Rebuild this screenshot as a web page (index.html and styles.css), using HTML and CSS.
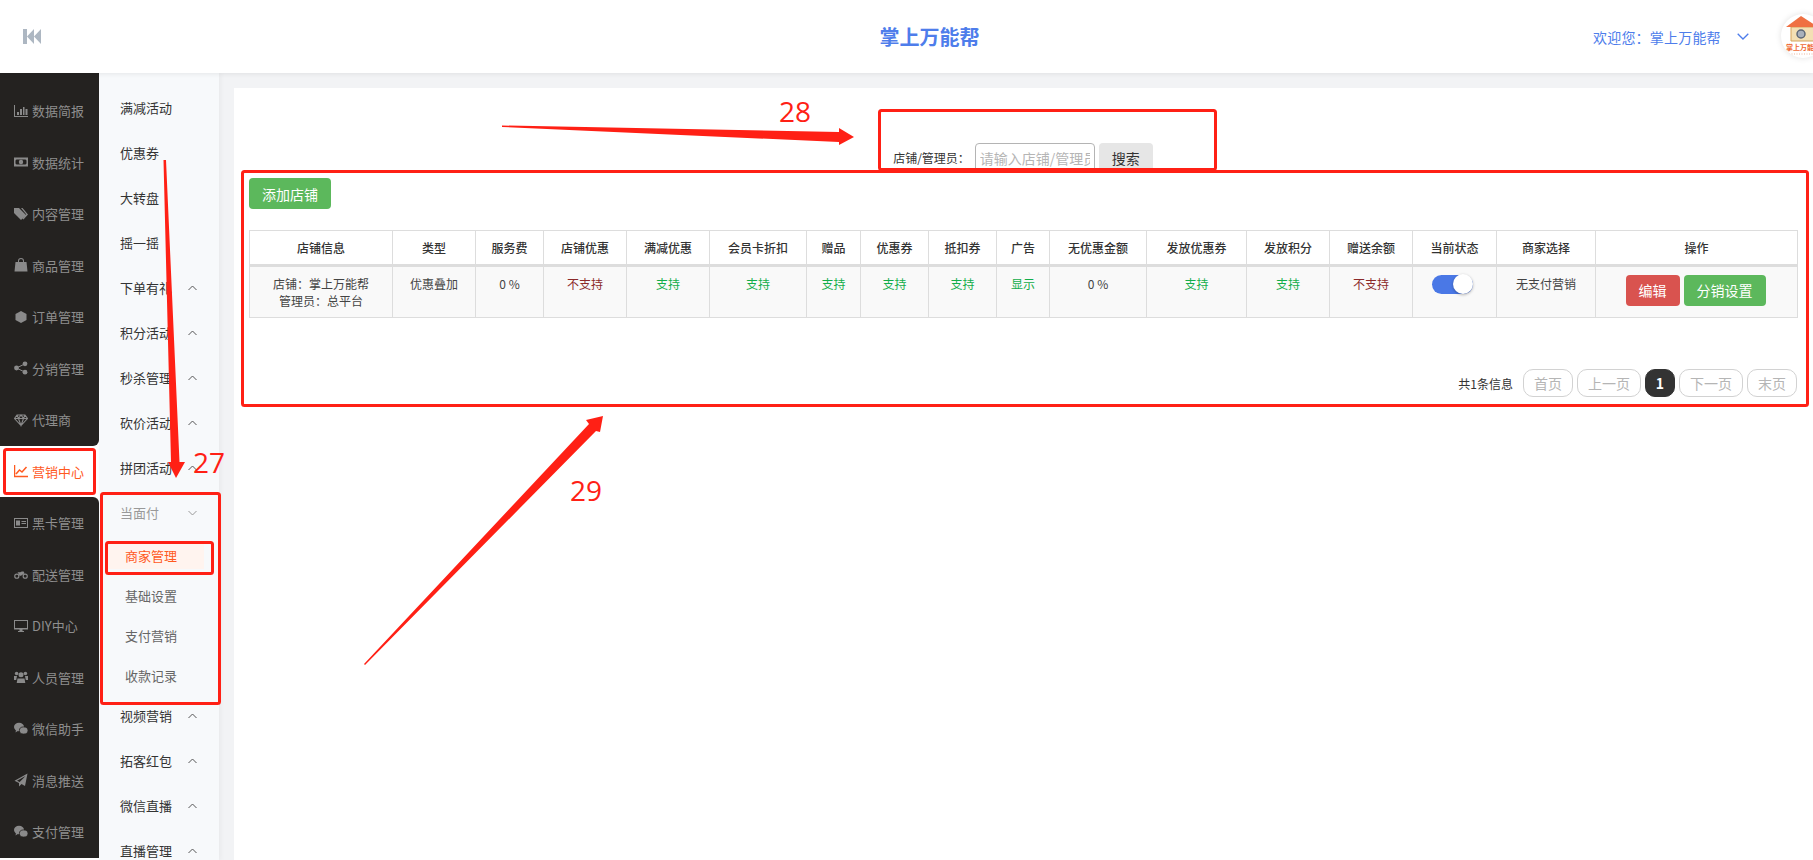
FILE: index.html
```html
<!DOCTYPE html>
<html lang="zh-CN">
<head>
<meta charset="utf-8">
<title>掌上万能帮</title>
<link rel="stylesheet" href="styles.css">
</head>
<body>
<div class="app">
  <header class="topbar">
    <div class="topbar-left">
      <svg class="collapse-icon" viewBox="0 0 18 15"><path d="M0 0h4v15H0zM4 7.500 11 0v15zM11 7.500 18 0v15z"/></svg>
    </div>
    <div class="brand">掌上万能帮</div>
    <div class="topbar-right">
      <span class="welcome">欢迎您：掌上万能帮</span>
      <svg class="user-chevron" viewBox="0 0 12 7"><path d="M.7.7 6 6l5.300-5.300"/></svg>
      <div class="avatar">
        <svg viewBox="0 0 44 44">
          <path class="logo-wall" d="M10 13h25v14H10z"/>
          <path class="logo-roof" d="M20 2 5 13h32z"/>
          <circle class="logo-gear" cx="20" cy="20" r="4"/>
          <text class="logo-name" x="22.500" y="36">掌上万能帮</text>
          <path class="logo-dots" d="M8 40h28"/>
        </svg>
      </div>
    </div>
  </header>

  <div class="workspace">
    <nav class="rail">
      <div class="rail-group rail-group-top">
        <a class="rail-item"><svg class="rail-icon" viewBox="0 0 14 14"><path d="M0 1h1v11h13v1H0zM3 8h2v3H3zM6 5h2v6H6zM9 3h1.500v8H9zM11.500 5h2v6h-2z"/></svg>数据简报</a>
        <a class="rail-item"><svg class="rail-icon" viewBox="0 0 14 14"><path fill-rule="evenodd" d="M0 2.500h14v9H0zM2.500 4.500 1.500 5.500v3l1 1h9l1-1v-3l-1-1zM7 4.800a2.200 2.200 0 1 1 0 4.400 2.200 2.200 0 0 1 0-4.400z"/></svg>数据统计</a>
        <a class="rail-item"><svg class="rail-icon" viewBox="0 0 14 14"><path d="M0 1h5l7 7-5 5-7-7zM7 1h1.500l5.500 6.500-4.500 5-1-.8 3.800-4.200z"/></svg>内容管理</a>
        <a class="rail-item"><svg class="rail-icon" viewBox="0 0 14 14"><path fill-rule="evenodd" d="M1.500 4H4V3a3 3 0 0 1 6 0v1h2.500l1 9.500H.5zM5 4h4V3a2 2 0 0 0-4 0z"/></svg>商品管理</a>
        <a class="rail-item"><svg class="rail-icon" viewBox="0 0 14 14"><path d="M7 1l5.500 3v6L7 13l-5.500-3V4z"/></svg>订单管理</a>
        <a class="rail-item"><svg class="rail-icon" viewBox="0 0 14 14"><circle cx="2.500" cy="7" r="2.400"/><circle cx="11" cy="2.800" r="2.400"/><circle cx="11" cy="11.200" r="2.400"/><path class="rail-line" d="M2.500 7 11 2.800M2.500 7 11 11.200"/></svg>分销管理</a>
        <a class="rail-item"><svg class="rail-icon rail-icon-outline" viewBox="0 0 14 14"><path d="M3 2h8l2.500 3.500L7 12.500.5 5.500zM.5 5.500h13M4.500 5.500 7 12.500l2.500-7M3 2l1.500 3.500L7 2l2.500 3.500L11 2"/></svg>代理商</a>
      </div>
      <a class="rail-item rail-item-active"><svg class="rail-icon rail-icon-outline" viewBox="0 0 14 14"><path d="M.5 1v11.500H14M2 10l3.500-4 2.500 2 4.500-5"/></svg>营销中心</a>
      <div class="rail-group rail-group-bottom">
        <a class="rail-item"><svg class="rail-icon" viewBox="0 0 14 14"><path fill-rule="evenodd" d="M0 2h14v10H0zM1 3v8h12V3zM2 4.500h4v5H2zM7.500 5H12v1H7.500zM7.500 7H12v1H7.500z"/></svg>黑卡管理</a>
        <a class="rail-item"><svg class="rail-icon" viewBox="0 0 16 14"><path fill-rule="evenodd" d="M3.200 6.500a3 3 0 1 1 0 6 3 3 0 0 1 0-6zm0 1.300a1.700 1.700 0 1 0 0 3.400 1.700 1.700 0 0 0 0-3.400zM12.800 6.500a3 3 0 1 1 0 6 3 3 0 0 1 0-6zm0 1.300a1.700 1.700 0 1 0 0 3.400 1.700 1.700 0 0 0 0-3.400zM4 5h3l2-1h2l1 2-4 3H6L5 6.500z"/></svg>配送管理</a>
        <a class="rail-item"><svg class="rail-icon" viewBox="0 0 14 14"><path fill-rule="evenodd" d="M0 1h14v9.500H8.500v1.500H10v1H4v-1h1.500v-1.500H0zM1 2v7h12V2z"/></svg>DIY中心</a>
        <a class="rail-item"><svg class="rail-icon" viewBox="0 0 14 14"><circle cx="7" cy="4.800" r="2.500"/><circle cx="2.600" cy="3.500" r="1.800"/><circle cx="11.400" cy="3.500" r="1.800"/><path d="M3.500 8.500h7l.8 4.500H2.700zM0 6h3L2.200 10H0zM14 6h-3l.8 4H14z"/></svg>人员管理</a>
        <a class="rail-item"><svg class="rail-icon" viewBox="0 0 14 14"><use href="#wechat-mark"/></svg>微信助手</a>
        <a class="rail-item"><svg class="rail-icon" viewBox="0 0 14 14"><path fill-rule="evenodd" d="M13.500.5 11 13 7.500 11 5 13.500V10L.5 7.800zM11.500 3 3 7.700l2.700 1.200z"/></svg>消息推送</a>
        <a class="rail-item"><svg class="rail-icon" viewBox="0 0 14 14"><use href="#wechat-mark"/></svg>支付管理</a>
      </div>
    </nav>

    <aside class="subnav">
      <a class="subnav-item">满减活动</a>
      <a class="subnav-item">优惠券</a>
      <a class="subnav-item">大转盘</a>
      <a class="subnav-item">摇一摇</a>
      <a class="subnav-item">下单有礼<svg class="chev" viewBox="0 0 9 6"><path d="M.5 5 4.500 1l4 4"/></svg></a>
      <a class="subnav-item">积分活动<svg class="chev" viewBox="0 0 9 6"><path d="M.5 5 4.500 1l4 4"/></svg></a>
      <a class="subnav-item">秒杀管理<svg class="chev" viewBox="0 0 9 6"><path d="M.5 5 4.500 1l4 4"/></svg></a>
      <a class="subnav-item">砍价活动<svg class="chev" viewBox="0 0 9 6"><path d="M.5 5 4.500 1l4 4"/></svg></a>
      <a class="subnav-item">拼团活动<svg class="chev" viewBox="0 0 9 6"><path d="M.5 5 4.500 1l4 4"/></svg></a>
      <a class="subnav-item subnav-item-open">当面付<svg class="chev" viewBox="0 0 9 6"><path d="M.5 1l4 4 4-4"/></svg></a>
      <div class="subnav-children">
        <a class="subnav-child subnav-child-active">商家管理</a>
        <a class="subnav-child">基础设置</a>
        <a class="subnav-child">支付营销</a>
        <a class="subnav-child">收款记录</a>
      </div>
      <a class="subnav-item">视频营销<svg class="chev" viewBox="0 0 9 6"><path d="M.5 5 4.500 1l4 4"/></svg></a>
      <a class="subnav-item">拓客红包<svg class="chev" viewBox="0 0 9 6"><path d="M.5 5 4.500 1l4 4"/></svg></a>
      <a class="subnav-item">微信直播<svg class="chev" viewBox="0 0 9 6"><path d="M.5 5 4.500 1l4 4"/></svg></a>
      <a class="subnav-item">直播管理<svg class="chev" viewBox="0 0 9 6"><path d="M.5 5 4.500 1l4 4"/></svg></a>
    </aside>

    <main class="main">
      <section class="card">
        <form class="search">
          <label class="search-label">店铺/管理员：</label>
          <input class="search-input" type="text" placeholder="请输入店铺/管理员">
          <button class="search-btn" type="button">搜索</button>
        </form>
        <button class="btn btn-green btn-add" type="button">添加店铺</button>
        <table class="grid">
          <colgroup>
            <col class="c143"><col class="c83"><col class="c68"><col class="c83"><col class="c83"><col class="c97"><col class="c54"><col class="c68"><col class="c68"><col class="c53"><col class="c97"><col class="c100"><col class="c83"><col class="c83"><col class="c84"><col class="c99"><col class="c202">
          </colgroup>
          <thead>
            <tr>
              <th>店铺信息</th><th>类型</th><th>服务费</th><th>店铺优惠</th><th>满减优惠</th><th>会员卡折扣</th><th>赠品</th><th>优惠券</th><th>抵扣券</th><th>广告</th><th>无优惠金额</th><th>发放优惠券</th><th>发放积分</th><th>赠送余额</th><th>当前状态</th><th>商家选择</th><th>操作</th>
            </tr>
          </thead>
          <tbody>
            <tr>
              <td>店铺：掌上万能帮<br>管理员：总平台</td>
              <td>优惠叠加</td>
              <td>0 %</td>
              <td class="no">不支持</td>
              <td class="yes">支持</td>
              <td class="yes">支持</td>
              <td class="yes">支持</td>
              <td class="yes">支持</td>
              <td class="yes">支持</td>
              <td class="yes">显示</td>
              <td>0 %</td>
              <td class="yes">支持</td>
              <td class="yes">支持</td>
              <td class="no">不支持</td>
              <td><span class="toggle"><span class="knob"></span></span></td>
              <td>无支付营销</td>
              <td><div class="actions"><button class="btn btn-red" type="button">编辑</button><button class="btn btn-green" type="button">分销设置</button></div></td>
            </tr>
          </tbody>
        </table>
        <div class="pager">
          <span class="pager-total">共1条信息</span>
          <a class="page">首页</a>
          <a class="page">上一页</a>
          <a class="page page-current">1</a>
          <a class="page">下一页</a>
          <a class="page">末页</a>
        </div>
      </section>
    </main>
  </div>

  <svg class="notes" viewBox="0 0 1813 860">
    <defs>
      <g id="wechat-mark">
        <ellipse cx="5" cy="5" rx="5" ry="4.200"/>
        <path d="M2 8 1.500 10.500 4.500 8.500z"/>
        <ellipse class="wechat-back" cx="9.700" cy="8.500" rx="4.300" ry="3.600"/>
      </g>
    </defs>
    <rect class="note-box" x="4.500" y="449.500" width="90" height="44" rx="2"/>
    <rect class="note-box" x="101.500" y="493.500" width="118" height="210" rx="2"/>
    <rect class="note-box" x="106.500" y="542.500" width="106" height="31" rx="2"/>
    <rect class="note-box" x="879.500" y="110.500" width="336" height="59" rx="2"/>
    <rect class="note-box" x="242.500" y="171.500" width="1565" height="234" rx="2"/>
    <polygon class="note-arrow" points="502,125.500 839,132 839,128 854,137 839,145 839,142 502,127"/>
    <polygon class="note-arrow" points="163.500,160 166,160 179.500,462 185,462 176,478 168,462 171,462"/>
    <polygon class="note-arrow" points="364,664 589,424 586,420 603,416 600,432 596,431 365,665"/>
    <text class="note-num" x="779" y="122">28</text>
    <text class="note-num" x="193" y="473">27</text>
    <text class="note-num" x="570" y="501">29</text>
  </svg>
</div>
</body>
</html>
```

FILE: styles.css
```css
* {
  box-sizing: border-box;
}

html,
body {
  margin: 0;
  height: 100%;
  overflow: hidden;
}

body {
  font-family: "Noto Sans CJK SC", "Noto Sans", sans-serif;
  color: #333;
  background: #f2f3f5;
}

a {
  color: inherit;
  text-decoration: none;
}

.app {
  position: relative;
  display: flex;
  flex-direction: column;
  width: 1813px;
  height: 860px;
  overflow: hidden;
}

/* top bar */
.topbar {
  position: relative;
  z-index: 2;
  flex: none;
  display: flex;
  align-items: center;
  height: 73px;
  background: #fff;
  box-shadow: 0 1px 5px rgba(0, 0, 0, 0.08);
}

.topbar-left {
  flex: none;
  width: 266px;
  padding-left: 23px;
  display: flex;
  align-items: center;
}

.collapse-icon {
  width: 18px;
  height: 15px;
  fill: #adb7c2;
}

.brand {
  flex: 1;
  text-align: center;
  font-size: 20px;
  font-weight: 700;
  color: #4e7deb;
}

.topbar-right {
  flex: none;
  width: 220px;
  display: flex;
  align-items: center;
}

.welcome {
  flex: none;
  width: 128px;
  font-size: 14px;
  letter-spacing: 0.2px;
  white-space: nowrap;
  color: #4e7deb;
}

.user-chevron {
  flex: none;
  width: 12px;
  height: 7px;
  margin: 0 32px 0 16px;
  fill: none;
  stroke: #4e7deb;
  stroke-width: 1.3;
}

.avatar {
  flex: none;
  width: 44px;
  height: 44px;
  margin-top: -2px;
  border-radius: 50%;
  overflow: hidden;
  background: #fff;
  box-shadow: 0 0 6px rgba(0, 0, 0, 0.12);
}

.avatar svg {
  display: block;
  width: 44px;
  height: 44px;
}

.logo-wall {
  fill: #f3dfb4;
  stroke: #d5a45c;
}

.logo-roof {
  fill: #ef7042;
}

.logo-gear {
  fill: #a9b0bb;
  stroke: #5d6675;
  stroke-width: 1.500;
}

.logo-name {
  font-size: 7px;
  font-weight: 700;
  fill: #ef6a34;
  text-anchor: middle;
}

.logo-dots {
  stroke: #e9b49b;
  stroke-dasharray: 1 1.500;
}

/* body of the page */
.workspace {
  flex: 1;
  display: flex;
  min-height: 0;
}

.rail {
  flex: none;
  width: 99px;
  background: #fff;
}

.rail-group {
  background: #242220;
}

.rail-group-top {
  padding-top: 12px;
  border-bottom-right-radius: 6px;
}

.rail-group-bottom {
  border-top-right-radius: 6px;
}

.rail-item {
  display: flex;
  align-items: center;
  gap: 4px;
  height: 51.500px;
  padding-left: 14px;
  font-size: 13px;
  color: #8e8e8e;
  white-space: nowrap;
}

.rail-item-active {
  color: #ff5a1f;
}

.rail-icon {
  flex: none;
  width: 14px;
  height: 14px;
  fill: #8a8a8a;
}

.rail-icon-outline {
  fill: none;
  stroke: #8a8a8a;
  stroke-width: 1.100;
}

.rail-item-active .rail-icon-outline {
  stroke: #ff5a1f;
  stroke-width: 1.500;
}

.rail-line {
  fill: none;
  stroke: #8a8a8a;
}

.wechat-back {
  stroke: #242220;
  stroke-width: 0.800;
}

.subnav {
  flex: none;
  width: 120px;
  padding-top: 12px;
  background: #f7f9fb;
  box-shadow: 2px 0 5px rgba(0, 0, 0, 0.04);
  overflow: hidden;
}

.subnav-item {
  display: flex;
  align-items: center;
  justify-content: space-between;
  height: 45px;
  padding: 0 22px 0 21px;
  font-size: 13px;
  color: #333;
}

.subnav-item-open {
  color: #999;
}

.chev {
  flex: none;
  width: 9px;
  height: 6px;
  fill: none;
  stroke: #555;
  stroke-width: 1;
}

.subnav-item-open .chev {
  stroke: #999;
}

.subnav-children {
  margin: 5px 0 -2px;
}

.subnav-child {
  display: flex;
  align-items: center;
  height: 40px;
  padding-left: 26px;
  font-size: 13px;
  color: #666;
}

.subnav-child-active {
  margin: 6px 15px 6px 7px;
  height: 28px;
  padding-left: 19px;
  background: #fff4ef;
  color: #ff5a1f;
}

/* content */
.main {
  flex: 1;
  min-width: 0;
  padding: 15px 0 0 15px;
}

.card {
  height: 100%;
  padding: 55px 16px 0 15px;
  background: #fff;
}

.search {
  display: flex;
  align-items: center;
  justify-content: center;
  height: 30px;
}

.search-label {
  margin-top: -1px;
  font-size: 12px;
  white-space: nowrap;
}

.search-input {
  width: 120px;
  height: 30px;
  margin-left: 5px;
  padding: 0 4px;
  border: 1px solid #b4b4b4;
  border-radius: 4px;
  outline: none;
  font: inherit;
  font-size: 14px;
}

.search-input::placeholder {
  color: #b5b5b5;
}

.search-btn {
  width: 54px;
  height: 30px;
  margin-left: 4px;
  padding: 0;
  border: 0;
  border-radius: 4px;
  background: #e6e6e6;
  color: #333;
  font: inherit;
  font-size: 14px;
}

.btn {
  display: block;
  height: 31px;
  padding: 0 13px;
  border: 0;
  border-radius: 4px;
  color: #fff;
  font: inherit;
  font-size: 14px;
  white-space: nowrap;
}

.btn-add {
  margin-top: 5px;
  width: 82px;
  padding: 0;
}

.btn-green {
  background: #5cb85c;
}

.btn-red {
  background: #d9534f;
}

.grid {
  width: 1548px;
  margin-top: 21px;
  border-collapse: collapse;
  table-layout: fixed;
  font-size: 12px;
  line-height: 17px;
  text-align: center;
}

.c143 { width: 143px; }
.c83 { width: 83px; }
.c68 { width: 68px; }
.c97 { width: 97px; }
.c54 { width: 54px; }
.c53 { width: 53px; }
.c100 { width: 100px; }
.c84 { width: 84px; }
.c99 { width: 99px; }
.c202 { width: 202px; }

.grid th,
.grid td {
  border: 1px solid #ddd;
  padding: 8px 0;
  vertical-align: top;
}

.grid th {
  height: 35px;
  border-bottom-width: 3px;
  font-weight: 500;
  color: #333;
}

.grid td {
  height: 51px;
  background: #f9f9f9;
  color: #444;
}

.grid .yes {
  color: #12ad49;
}

.grid .no {
  color: #8b2a2a;
}

.toggle {
  display: block;
  position: relative;
  width: 41px;
  height: 19px;
  margin-left: 19px;
  border-radius: 10px;
  background: #4a78e6;
}

.knob {
  position: absolute;
  top: -1px;
  right: 0;
  width: 20px;
  height: 20px;
  border-radius: 50%;
  background: #fff;
  box-shadow: 0 1px 3px rgba(0, 0, 0, 0.3);
}

.actions {
  display: flex;
  justify-content: center;
  gap: 4px;
  padding-right: 2px;
}

.pager {
  display: flex;
  align-items: center;
  justify-content: flex-end;
  gap: 4px;
  margin-top: 51px;
}

.pager-total {
  margin-right: 6px;
  font-size: 12px;
  color: #333;
}

.page {
  display: flex;
  align-items: center;
  justify-content: center;
  height: 28px;
  padding: 0 10px;
  border: 1px solid #d2d2d2;
  border-radius: 10px;
  font-size: 14px;
  color: #b5b5b5;
}

.page-current {
  width: 30px;
  padding: 0;
  border-color: #333;
  background: #333;
  color: #fff;
  font-weight: 700;
}

/* red hand-drawn annotations on top of the screenshot */
.notes {
  position: absolute;
  inset: 0;
  width: 1813px;
  height: 860px;
  pointer-events: none;
}

.note-box {
  fill: none;
  stroke: #ff2015;
  stroke-width: 3;
}

.note-arrow {
  fill: #ff2015;
}

.note-num {
  font-family: "Open Sans", "Noto Sans", sans-serif;
  font-size: 28px;
  fill: #ff2015;
}
```
